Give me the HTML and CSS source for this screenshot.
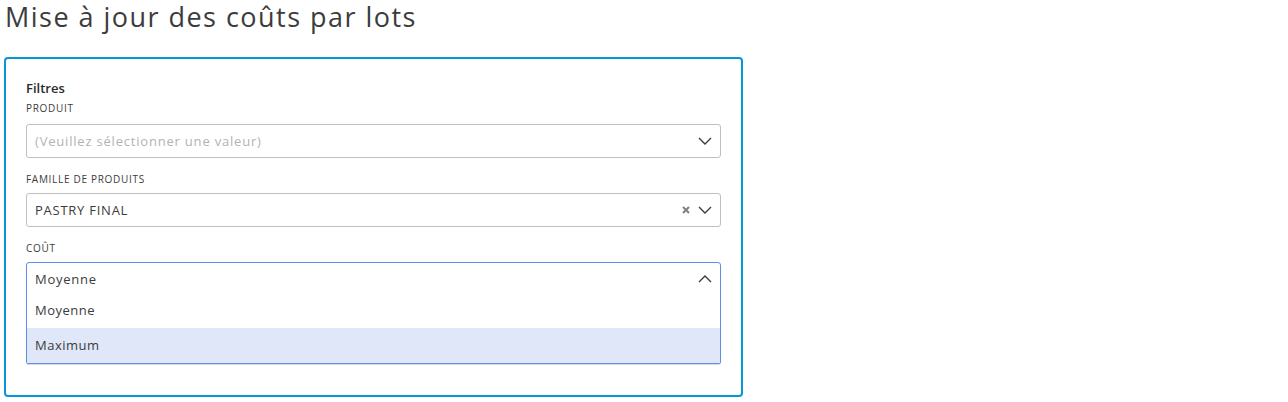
FILE: index.html
```html
<!DOCTYPE html>
<html lang="fr">
<head>
<meta charset="utf-8">
<link rel="stylesheet" href="styles.css">
</head>
<body>
<h1 class="title">Mise à jour des coûts par lots</h1>
<section class="panel">
  <h2 class="panel-title">Filtres</h2>
  <div class="field field-first">
    <label class="field-label">PRODUIT</label>
    <div class="select">
      <span class="select-value placeholder">(Veuillez sélectionner une valeur)</span>
      <span class="select-icons">
        <svg class="chevron" width="14" height="8" viewBox="0 0 14 8"><path d="M1 1l6 6 6-6" fill="none" stroke="#3c3c3c" stroke-width="1.4"/></svg>
      </span>
    </div>
  </div>
  <div class="field">
    <label class="field-label">FAMILLE DE PRODUITS</label>
    <div class="select">
      <span class="select-value">PASTRY FINAL</span>
      <span class="select-icons">
        <svg class="clear" width="8" height="8" viewBox="0 0 8 8"><path d="M1 1l6 6M7 1l-6 6" fill="none" stroke="#808080" stroke-width="2"/></svg>
        <svg class="chevron" width="14" height="8" viewBox="0 0 14 8"><path d="M1 1l6 6 6-6" fill="none" stroke="#3c3c3c" stroke-width="1.4"/></svg>
      </span>
    </div>
  </div>
  <div class="field">
    <label class="field-label">COÛT</label>
    <div class="select select-open">
      <div class="select-control">
        <span class="select-value">Moyenne</span>
        <span class="select-icons">
          <svg class="chevron" width="14" height="8" viewBox="0 0 14 8"><path d="M1 7l6-6 6 6" fill="none" stroke="#3c3c3c" stroke-width="1.4"/></svg>
        </span>
      </div>
      <ul class="menu">
        <li class="option option-first">Moyenne</li>
        <li class="option option-active">Maximum</li>
      </ul>
    </div>
  </div>
</section>
</body>
</html>
```
FILE: styles.css
```css
* { box-sizing: border-box; }
body {
  margin: 0;
  padding: 0 4px;
  background: #fff;
  font-family: "Open Sans", "Noto Sans", sans-serif;
  color: #3c3c3c;
}
.title {
  margin: 0;
  padding: 0 0 0 1px;
  height: 57px;
  font-size: 27px;
  font-weight: 400;
  letter-spacing: 1.47px;
  line-height: 34px;
  color: #3c3c3c;
}
.panel {
  width: 739px;
  height: 340px;
  border: 2px solid #0696d7;
  border-radius: 4px;
  padding: 20px 20px 0 20px;
}
.panel-title {
  margin: 0;
  font-size: 13px;
  font-weight: 600;
  line-height: 18px;
  color: #2a2a2a;
}
.field { margin-bottom: 14px; }
.field-label {
  display: block;
  font-size: 10px;
  line-height: 14px;
  letter-spacing: 0.7px;
  color: #3c3c3c;
  margin: 4px 0 7px;
}
.field-first .field-label { margin: 4px 0 9px; }
.select {
  height: 34px;
  border: 1px solid #bfbfbf;
  border-radius: 3px;
  display: flex;
  align-items: center;
  padding: 0 8px 1px 8px;
}
.select-value {
  flex: 1;
  font-size: 13px;
  letter-spacing: 0.75px;
  color: #3c3c3c;
}
.placeholder { color: #b3b3b3; letter-spacing: 0.8px; }
.select-icons {
  display: flex;
  align-items: center;
  gap: 8px;
}
.select-open {
  display: block;
  height: auto;
  padding: 0;
  border-color: #5f8ee6;
  border-radius: 3px 3px 2px 2px;
  box-shadow: 0 1px 1px rgba(0,0,0,0.15);
}
.select-control {
  height: 33px;
  display: flex;
  align-items: center;
  padding: 0 8px 2px;
}
.menu {
  list-style: none;
  margin: 0;
  padding: 0;
}
.option {
  height: 32px;
  display: flex;
  align-items: center;
  padding: 0 8px 1px;
  font-size: 13px;
  letter-spacing: 0.5px;
  color: #3c3c3c;
}
.option-first { padding-bottom: 4px; }
.option-active { height: 35px; background: #dfe7f8; padding-bottom: 2px; }
```
